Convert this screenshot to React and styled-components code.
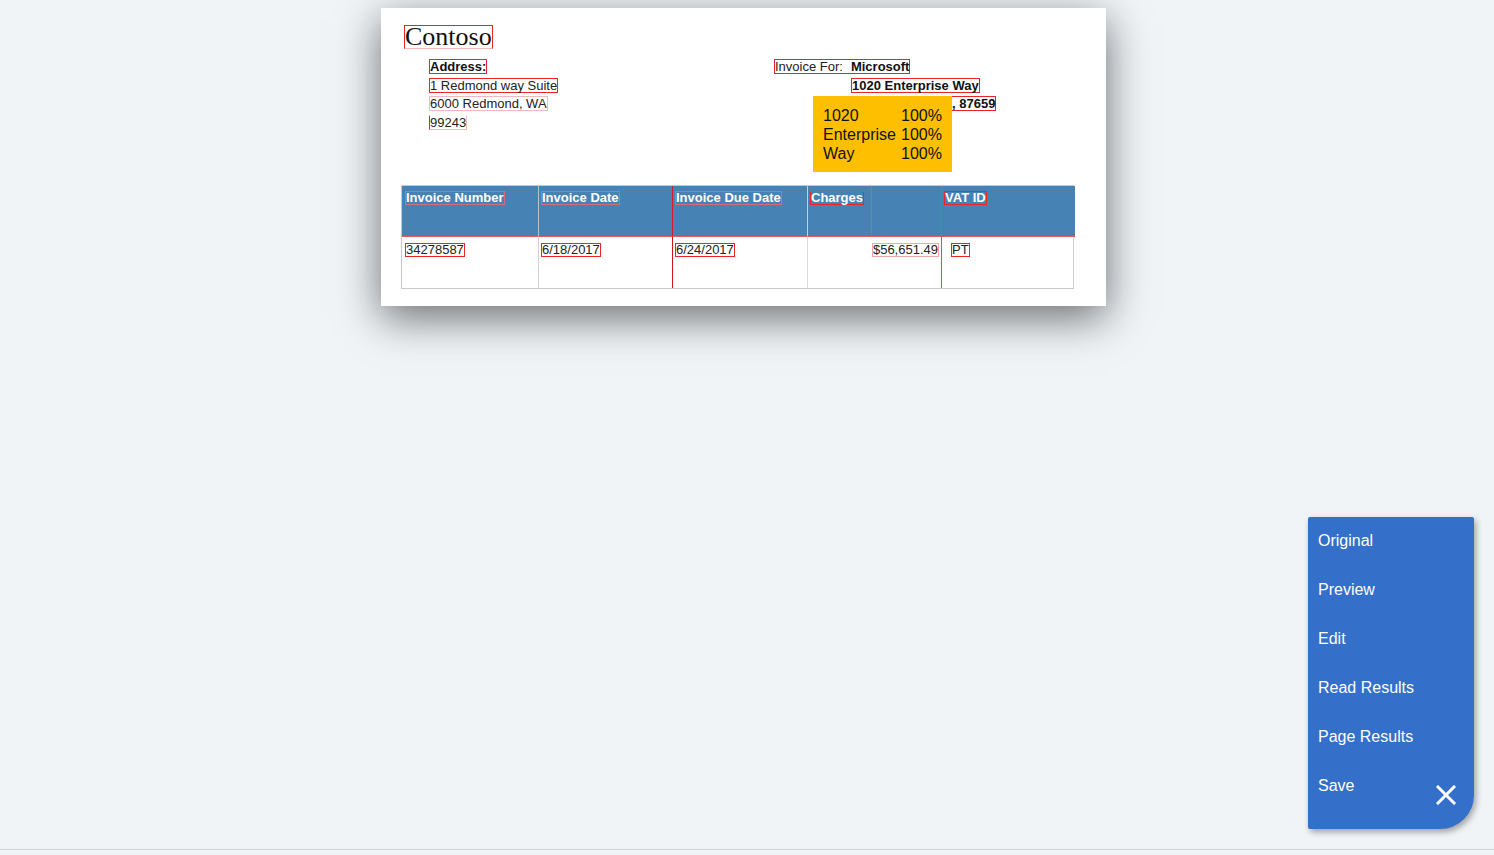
import React from 'react'
import styled, { createGlobalStyle } from 'styled-components'

const Global = createGlobalStyle`
  html, body { margin: 0; padding: 0; background: #f0f4f7; }
  body { font-family: "Liberation Sans", Arial, sans-serif; }
`

const Page = styled.div`
  position: relative;
  height: 849px;
  border-bottom: 1px solid #d6d6d6;
  background: #f0f4f7;
  overflow: hidden;
`

const Card = styled.div`
  position: relative;
  margin: 8px 0 0 381px;
  width: 725px;
  height: 298px;
  box-sizing: border-box;
  background: #fff;
  box-shadow: 0 12px 40px rgba(0, 0, 0, 0.55);
  padding: 16px 0 0 20px;
`

const Mark = styled.span`
  display: inline-block;
  border: 1px solid ${({ tone }) => tone || '#e8262a'};
  line-height: ${({ lh }) => lh || 'normal'};
  margin-left: ${({ ml }) => ml || 0}px;
`

const Title = styled.div`
  font-family: "Liberation Serif", "Times New Roman", serif;
  font-size: 26px;
  color: #111;
  line-height: 26px;
  margin-left: 3px;
  height: 28px;
`

const Top = styled.div`
  display: flex;
  height: 133px;
  font-size: 13px;
  color: #222;
`

const AddressCol = styled.div`
  width: 345px;
  padding: 7px 0 0 28px;
  display: flex;
  flex-direction: column;
  gap: 2px;
`

const Line = styled.div`
  height: 16.5px;
  line-height: 15px;
  font-weight: ${({ bold }) => (bold ? 700 : 400)};
  padding-left: ${({ indent }) => indent || 0}px;
  color: ${({ bold }) => (bold ? '#111' : '#222')};
`

const ForCol = styled.div`
  position: relative;
  padding: 7px 0 0 0;
  display: flex;
  flex-direction: column;
  gap: 2px;
`

const Bold = styled.b`
  color: #111;
  margin-left: 8px;
`

const Tip = styled.div`
  position: absolute;
  left: 39px;
  top: 44px;
  width: 139px;
  height: 76px;
  box-sizing: border-box;
  background: #fdbf00;
  padding: 11px 0 0 10px;
  display: grid;
  grid-template-columns: 78px auto;
  grid-auto-rows: 19px;
  font-size: 16px;
  color: #111;
`

const Table = styled.div`
  width: 673px;
  display: grid;
  grid-template-columns: 136px 134px 135px 134px 134px;
  border: 1px solid #c9c9c9;
  border-right-color: #d0d0d0;
  box-sizing: border-box;
`

const Head = styled.div`
  height: 51px;
  background: #4682b4;
  color: #fff;
  font-size: 13px;
  font-weight: 700;
  padding: 5px 2px 0;
  box-sizing: border-box;
  border-left: 1px solid ${({ edge }) => edge || 'transparent'};
  border-bottom: 1px solid #e65a5a;
  display: flex;
  justify-content: space-between;
  align-items: flex-start;
`

const Cell = styled.div`
  height: 51px;
  font-size: 13px;
  color: #222;
  padding: 5px 2px 0;
  box-sizing: border-box;
  border-left: 1px solid ${({ edge }) => edge || 'transparent'};
  text-align: ${({ right }) => (right ? 'right' : 'left')};
`

const SubSplit = styled.span`
  align-self: stretch;
  margin: -5px 67px 0 0;
  border-left: 1px solid #b2687a;
`

const Menu = styled.nav`
  position: absolute;
  left: 1308px;
  top: 517px;
  width: 166px;
  height: 312px;
  background: #346fca;
  border-radius: 2px 2px 34px 2px;
  box-shadow: 2px 3px 6px rgba(0, 0, 0, 0.35);
  box-sizing: border-box;
`

const Item = styled.div`
  height: 49px;
  line-height: 47px;
  padding-left: 10px;
  font-size: 16px;
  color: #fff;
`

const Close = styled.svg`
  position: absolute;
  left: 1436px;
  top: 785px;
`

const menu = ['Original', 'Preview', 'Edit', 'Read Results', 'Page Results', 'Save']

export default function App() {
  return (
    <>
      <Global />
      <Page>
        <Card>
          <Title>
            <Mark lh="22px" style={{ borderBottomColor: '#f4b9b9' }}>Contoso</Mark>
          </Title>
          <Top>
            <AddressCol>
              <Line bold><Mark lh="13px">Address:</Mark></Line>
              <Line><Mark lh="13px">1 Redmond way Suite</Mark></Line>
              <Line><Mark tone="#f4b9b9" lh="13px">6000 Redmond, WA</Mark></Line>
              <Line><Mark tone="#f4b9b9" lh="13px" style={{ borderTopColor: 'transparent', borderLeftColor: '#c33' }}>99243</Mark></Line>
            </AddressCol>
            <ForCol>
              <Line>
                <Mark lh="13px">Invoice For:<Bold>Microsoft</Bold></Mark>
              </Line>
              <Line indent={77}><Mark lh="13px"><b style={{ color: '#111' }}>1020 Enterprise Way</b></Mark></Line>
              <Line indent={177}><Mark lh="13px"><b style={{ color: '#111' }}>, 87659</b></Mark></Line>
              <Tip>
                <span>1020</span><span>100%</span>
                <span>Enterprise</span><span>100%</span>
                <span>Way</span><span>100%</span>
              </Tip>
            </ForCol>
          </Top>
          <Table>
            <Head><Mark tone="#d86a7a" lh="12px">Invoice Number</Mark></Head>
            <Head edge="#b9c4cf"><Mark tone="#d86a7a" lh="12px">Invoice Date</Mark></Head>
            <Head edge="#d9182a"><Mark tone="#d86a7a" lh="12px">Invoice Due Date</Mark></Head>
            <Head edge="#c9cfd6">
              <Mark lh="12px" style={{ borderTopColor: 'transparent' }}>Charges</Mark>
              <SubSplit />
            </Head>
            <Head edge="#d6506a"><Mark lh="12px">VAT ID</Mark></Head>
            <Cell><Mark lh="12px">34278587</Mark></Cell>
            <Cell edge="#d8d0d0"><Mark lh="12px">6/18/2017</Mark></Cell>
            <Cell edge="#c9161f"><Mark lh="12px">6/24/2017</Mark></Cell>
            <Cell edge="#f3d2d4" right><Mark tone="#f0a6a6" lh="12px">$56,651.49</Mark></Cell>
            <Cell edge="#d44f5c"><Mark lh="12px" ml={7}>PT</Mark></Cell>
          </Table>
        </Card>
        <Menu>
          {menu.map((m) => (
            <Item key={m}>{m}</Item>
          ))}
        </Menu>
        <Close width="20" height="20" viewBox="0 0 20 20">
          <path d="M2 2 L18 18 M18 2 L2 18" stroke="#fff" strokeWidth="3" strokeLinecap="square" />
        </Close>
      </Page>
    </>
  )
}
